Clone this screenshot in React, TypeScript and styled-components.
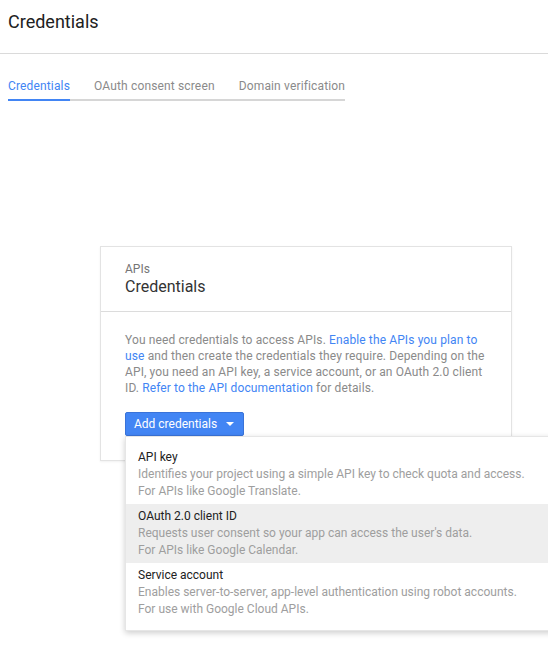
import React from "react";
import styled, { createGlobalStyle } from "styled-components";

const Global = createGlobalStyle`
  html, body { margin: 0; padding: 0; background: #fff; }
  body { font-family: Roboto, "Liberation Sans", Arial, sans-serif; overflow: hidden; }
  * { box-sizing: border-box; }
`;

const Page = styled.div`
  width: 548px;
  min-height: 645px;
  overflow: hidden;
`;

const Header = styled.header`
  height: 54px;
  padding: 10px 8px 0;
  border-bottom: 1px solid #dadada;
`;

const Title = styled.h1`
  margin: 0;
  font-size: 18px;
  line-height: 24px;
  font-weight: 400;
  color: #212121;
`;

const Tabs = styled.nav`
  display: inline-flex;
  gap: 24px;
  margin: 24px 0 0 8px;
  border-bottom: 2px solid #d6d6d6;
`;

const Tab = styled.a<{ $active?: boolean }>`
  display: block;
  font-size: 12px;
  line-height: 16px;
  letter-spacing: 0.15px;
  padding-bottom: 5px;
  margin-bottom: -2px;
  border-bottom: 2px solid ${(p) => (p.$active ? "#4285f4" : "transparent")};
  color: ${(p) => (p.$active ? "#4285f4" : "#8a8a8a")};
  text-decoration: none;
`;

const Card = styled.section`
  width: 412px;
  margin: 145px 0 0 100px;
  border: 1px solid #e3e3e3;
  box-shadow: 0 1px 2px rgba(0, 0, 0, 0.06);
  background: #fff;
`;

const CardHead = styled.div`
  padding: 14px 24px 14px;
  border-bottom: 1px solid #dcdcdc;
`;

const Eyebrow = styled.div`
  font-size: 12px;
  line-height: 16px;
  color: #757575;
`;

const CardTitle = styled.h2`
  margin: 0;
  font-size: 16px;
  line-height: 20px;
  font-weight: 400;
  color: #333;
`;

const CardBody = styled.div`
  padding: 20px 24px 24px;
`;

const Text = styled.p`
  margin: 0 0 16px;
  font-size: 12px;
  line-height: 16px;
  letter-spacing: 0.12px;
  color: #8a8a8a;
`;

const Link = styled.a`
  color: #4285f4;
  text-decoration: none;
`;

const MenuAnchor = styled.div`
  position: relative;
  display: inline-block;
`;

const Button = styled.button`
  display: flex;
  align-items: center;
  gap: 9px;
  height: 24px;
  padding: 0 9px 0 8px;
  background: #4285f4;
  border: 1px solid #3a73d8;
  border-radius: 2px;
  color: #fff;
  font-family: inherit;
  font-size: 12px;
`;

const Caret = styled.span`
  width: 0;
  height: 0;
  border-left: 4px solid transparent;
  border-right: 4px solid transparent;
  border-top: 4px solid #fff;
`;

const Menu = styled.ul`
  position: absolute;
  top: 24px;
  left: 0;
  width: 440px;
  margin: 0;
  padding: 8px 0;
  list-style: none;
  background: #fff;
  border: 1px solid #e6e6e6;
  box-shadow: 0 2px 6px rgba(0, 0, 0, 0.2);
`;

const Item = styled.li<{ $hover?: boolean }>`
  padding: 4px 12px;
  background: ${(p) => (p.$hover ? "#eeeeee" : "transparent")};
  font-size: 12px;
  line-height: 17px;
`;

const ItemTitle = styled.div`
  color: #212121;
`;

const ItemDesc = styled.div`
  color: #9e9e9e;
`;

const items = [
  {
    title: "API key",
    lines: [
      "Identifies your project using a simple API key to check quota and access.",
      "For APIs like Google Translate.",
    ],
  },
  {
    title: "OAuth 2.0 client ID",
    lines: ["Requests user consent so your app can access the user's data.", "For APIs like Google Calendar."],
    hover: true,
  },
  {
    title: "Service account",
    lines: [
      "Enables server-to-server, app-level authentication using robot accounts.",
      "For use with Google Cloud APIs.",
    ],
  },
];

export default function App() {
  return (
    <Page>
      <Global />
      <Header>
        <Title>Credentials</Title>
      </Header>
      <Tabs>
        <Tab $active>Credentials</Tab>
        <Tab>OAuth consent screen</Tab>
        <Tab>Domain verification</Tab>
      </Tabs>
      <Card>
        <CardHead>
          <Eyebrow>APIs</Eyebrow>
          <CardTitle>Credentials</CardTitle>
        </CardHead>
        <CardBody>
          <Text>
            You need credentials to access APIs. <Link>Enable the APIs you plan to use</Link> and then create the
            credentials they require. Depending on the API, you need an API key, a service account, or an OAuth 2.0
            client ID. <Link>Refer to the API documentation</Link> for details.
          </Text>
          <MenuAnchor>
            <Button>
              Add credentials
              <Caret />
            </Button>
            <Menu>
              {items.map((it) => (
                <Item key={it.title} $hover={it.hover}>
                  <ItemTitle>{it.title}</ItemTitle>
                  {it.lines.map((l) => (
                    <ItemDesc key={l}>{l}</ItemDesc>
                  ))}
                </Item>
              ))}
            </Menu>
          </MenuAnchor>
        </CardBody>
      </Card>
    </Page>
  );
}
